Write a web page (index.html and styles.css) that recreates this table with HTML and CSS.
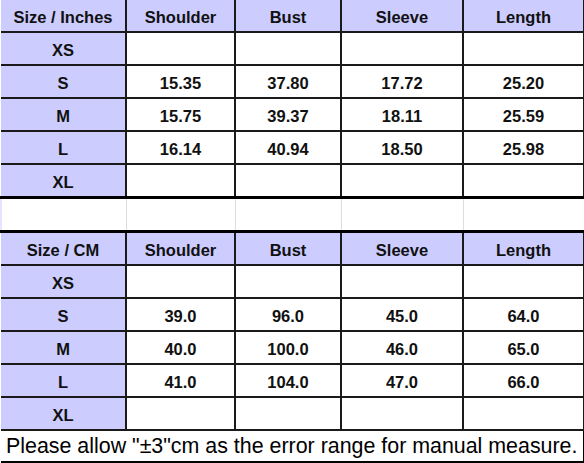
FILE: index.html
```html
<!DOCTYPE html>
<html>
<head>
<meta charset="utf-8">
<link rel="stylesheet" href="styles.css">
</head>
<body>
<table class="chart">
  <colgroup>
    <col class="c1"><col class="c2"><col class="c3"><col class="c4"><col class="c5">
  </colgroup>
  <tbody>
    <tr class="head"><th>Size / Inches</th><th>Shoulder</th><th>Bust</th><th>Sleeve</th><th>Length</th></tr>
    <tr><th>XS</th><td></td><td></td><td></td><td></td></tr>
    <tr><th>S</th><td>15.35</td><td>37.80</td><td>17.72</td><td>25.20</td></tr>
    <tr><th>M</th><td>15.75</td><td>39.37</td><td>18.11</td><td>25.59</td></tr>
    <tr><th>L</th><td>16.14</td><td>40.94</td><td>18.50</td><td>25.98</td></tr>
    <tr class="last"><th>XL</th><td></td><td></td><td></td><td></td></tr>
    <tr class="gap"><td></td><td></td><td></td><td></td><td></td></tr>
    <tr class="head"><th>Size / CM</th><th>Shoulder</th><th>Bust</th><th>Sleeve</th><th>Length</th></tr>
    <tr><th>XS</th><td></td><td></td><td></td><td></td></tr>
    <tr><th>S</th><td>39.0</td><td>96.0</td><td>45.0</td><td>64.0</td></tr>
    <tr><th>M</th><td>40.0</td><td>100.0</td><td>46.0</td><td>65.0</td></tr>
    <tr><th>L</th><td>41.0</td><td>104.0</td><td>47.0</td><td>66.0</td></tr>
    <tr><th>XL</th><td></td><td></td><td></td><td></td></tr>
    <tr class="note"><td colspan="5">Please allow "±3"cm as the error range for manual measure.</td></tr>
  </tbody>
</table>
</body>
</html>
```
FILE: styles.css
```css
html, body {
  margin: 0;
  padding: 0;
  background: #ffffff;
}

.chart {
  border-collapse: collapse;
  table-layout: fixed;
  width: 583px;
  font-family: "Liberation Sans", Arial, sans-serif;
  font-weight: bold;
  font-size: 16.5px;
  color: #111111;
}

.c1 { width: 125px; }
.c2 { width: 109px; }
.c3 { width: 106px; }
.c4 { width: 122px; }
.c5 { width: 121px; }

.chart th,
.chart td {
  height: 28px;
  padding: 3px 0 0 0;
  text-align: center;
  vertical-align: middle;
  border: 2px solid #1a1a1a;
  font-weight: bold;
}

.chart th {
  background: #ccccff;
}

.chart tr:first-child th {
  border-top: none;
}

.chart th:first-child,
.chart td:first-child {
  border-left: none;
}

.chart tr.last th,
.chart tr.last td {
  border-bottom: 3px solid #000000;
}

.chart tr.gap td {
  height: 28px;
  background: #ffffff;
  border-left: 1px solid #dddddd;
  border-right: 1px solid #dddddd;
  border-bottom: 3px solid #000000;
}

.chart tr.gap td:first-child {
  border-left: 2px solid #e4e4ff;
}

.chart tr.note td {
  height: 30px;
  text-align: left;
  padding: 0 0 0 5px;
  font-weight: normal;
  font-size: 21.4px;
  color: #000000;
  border-bottom: 3px solid #000000;
  border-right: 2px solid #000000;
}
```
